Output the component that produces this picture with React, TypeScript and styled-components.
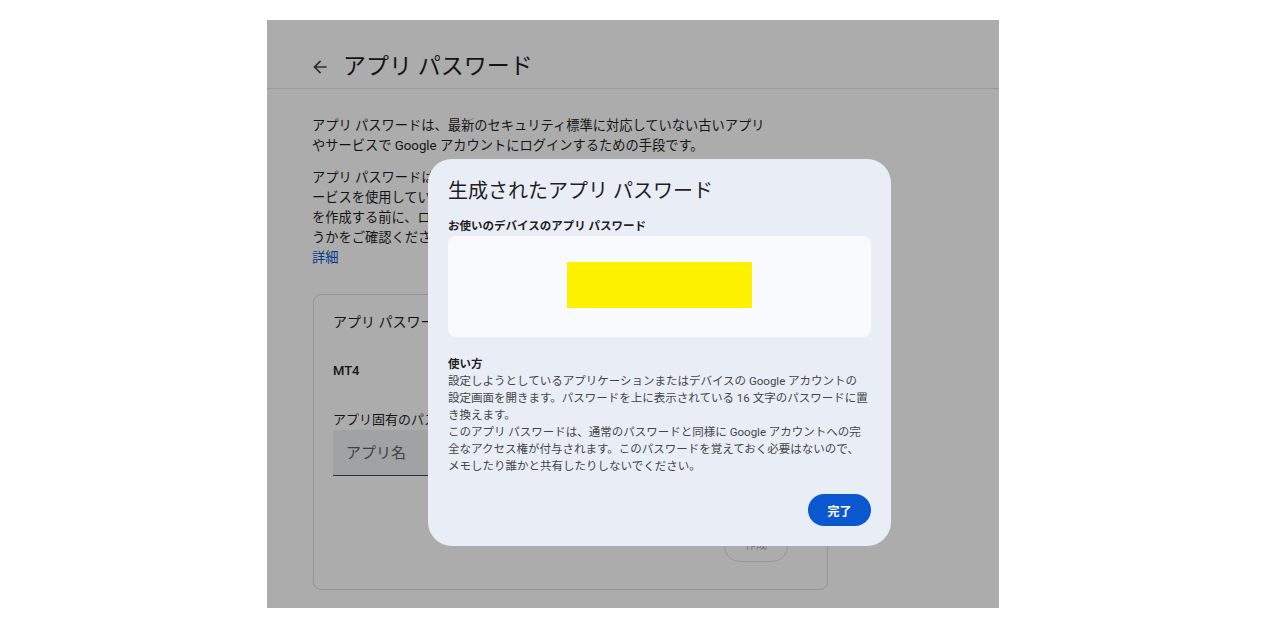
import React from "react";
import styled, { createGlobalStyle } from "styled-components";

const GlobalStyle = createGlobalStyle`
  html, body { margin: 0; padding: 0; background: #ffffff; }
  body {
    font-family: Roboto, "Noto Sans CJK JP", sans-serif;
    -webkit-font-smoothing: antialiased;
  }
  * { box-sizing: border-box; }
`;

const Stage = styled.div`
  display: flex;
  justify-content: center;
  padding-top: 20px;
`;

const Frame = styled.div`
  position: relative;
  width: 732px;
  height: 588px;
  overflow: hidden;
  background: #ffffff;
  color: #1f1f1f;
`;

const Header = styled.header`
  height: 69px;
  border-bottom: 1px solid #e3e3e3;
  display: flex;
  align-items: center;
  padding: 31px 0 5px 43px;
  gap: 13px;
`;

const BackIcon = styled.svg`
  width: 20px;
  height: 20px;
  fill: #444746;
  flex: none;
`;

const PageTitle = styled.h1`
  margin: 0;
  font-size: 23px;
  line-height: 32px;
  font-weight: 400;
  color: #1f1f1f;
`;

const Content = styled.main`
  padding: 27px 0 0 45px;
`;

const Para = styled.p<{ $mb: number }>`
  margin: 0 0 ${(p) => p.$mb}px;
  font-size: 13.25px;
  line-height: 20px;
  color: #1f1f1f;
  white-space: nowrap;
`;

const Link = styled.a`
  color: #0b57d0;
  text-decoration: none;
`;

const Card = styled.section`
  margin-left: 1px;
  width: 515px;
  height: 296px;
  border: 1px solid #dadce0;
  border-radius: 8px;
  padding: 17px 0 0 19px;
`;

const CardTitle = styled.h2`
  margin: 0 0 29px;
  font-size: 14px;
  line-height: 20px;
  font-weight: 400;
  color: #1f1f1f;
`;

const AppName = styled.div`
  margin-bottom: 29px;
  font-size: 13px;
  line-height: 20px;
  font-weight: 500;
  color: #1f1f1f;
`;

const FieldLabel = styled.div`
  font-size: 13px;
  line-height: 20px;
  color: #1f1f1f;
`;

const Field = styled.div`
  width: 455px;
  height: 46px;
  background: #eef0f3;
  border-bottom: 1px solid #444746;
  border-radius: 4px 4px 0 0;
  display: flex;
  align-items: center;
  padding: 0 0 3px 13px;
  font-size: 15px;
  color: #5f6368;
`;

const Actions = styled.div`
  width: 455px;
  margin-top: 54px;
  display: flex;
  justify-content: flex-end;
`;

const OutlineButton = styled.button`
  width: 64px;
  height: 32px;
  border-radius: 16px;
  border: 1px solid rgba(31, 31, 31, 0.14);
  background: transparent;
  font-family: inherit;
  font-size: 11px;
  color: rgba(31, 31, 31, 0.4);
  padding: 0 0 5px;
`;

const Scrim = styled.div`
  position: absolute;
  inset: 0;
  background: rgba(0, 0, 0, 0.325);
`;

const Dialog = styled.div`
  position: absolute;
  left: 161px;
  top: 139px;
  width: 463px;
  height: 387px;
  padding: 18px 20px 20px;
  background: #e9eef6;
  border-radius: 24px;
  display: flex;
  flex-direction: column;
`;

const DialogTitle = styled.h2`
  margin: 0 0 13px;
  font-size: 20px;
  line-height: 28px;
  font-weight: 400;
  color: #1f1f1f;
`;

const SubHeading = styled.div`
  margin-bottom: 2px;
  font-size: 11.5px;
  line-height: 16px;
  font-weight: 700;
  color: #1f1f1f;
`;

const PasswordBox = styled.div`
  height: 101px;
  background: #f8fafd;
  border-radius: 8px;
  display: flex;
  align-items: center;
  justify-content: center;
  padding-bottom: 3px;
`;

const Redaction = styled.div`
  width: 185px;
  height: 46px;
  background: #fff200;
`;

const HowTo = styled.div`
  margin-top: 19px;
  font-size: 11.5px;
  line-height: 17px;
  color: #444746;
  white-space: nowrap;
`;

const HowToTitle = styled.div`
  font-weight: 700;
  color: #1f1f1f;
`;

const DialogFooter = styled.div`
  margin-top: auto;
  display: flex;
  justify-content: flex-end;
`;

const PrimaryButton = styled.button`
  width: 63px;
  height: 32px;
  border: none;
  border-radius: 16px;
  background: #0b57d0;
  color: #ffffff;
  font-family: inherit;
  font-size: 12px;
  font-weight: 700;
  padding: 0;
`;

export default function App() {
  return (
    <>
      <GlobalStyle />
      <Stage>
        <Frame>
          <Header>
            <BackIcon viewBox="0 0 24 24">
              <path d="M20 11H7.83l5.59-5.59L12 4l-8 8 8 8 1.41-1.41L7.83 13H20v-2z" />
            </BackIcon>
            <PageTitle>アプリ パスワード</PageTitle>
          </Header>
          <Content>
            <Para $mb={12}>
              アプリ パスワードは、最新のセキュリティ標準に対応していない古いアプリ
              <br />
              やサービスで Google アカウントにログインするための手段です。
            </Para>
            <Para $mb={26}>
              アプリ パスワードは、最新のセキュリティ標準を使用する最新のアプリやサ
              <br />
              ービスを使用している場合に比べて安全性が低くなります。
              <br />
              を作成する前に、ログインに必要かど
              <br />
              うかをご確認ください。
              <br />
              <Link href="#">詳細</Link>
            </Para>
            <Card>
              <CardTitle>アプリ パスワード</CardTitle>
              <AppName>MT4</AppName>
              <FieldLabel>アプリ固有のパスワード</FieldLabel>
              <Field>アプリ名</Field>
              <Actions>
                <OutlineButton>作成</OutlineButton>
              </Actions>
            </Card>
          </Content>
          <Scrim />
          <Dialog role="dialog">
            <DialogTitle>生成されたアプリ パスワード</DialogTitle>
            <SubHeading>お使いのデバイスのアプリ パスワード</SubHeading>
            <PasswordBox>
              <Redaction />
            </PasswordBox>
            <HowTo>
              <HowToTitle>使い方</HowToTitle>
              設定しようとしているアプリケーションまたはデバイスの Google アカウントの
              <br />
              設定画面を開きます。パスワードを上に表示されている 16 文字のパスワードに置
              <br />
              き換えます。
              <br />
              このアプリ パスワードは、通常のパスワードと同様に Google アカウントへの完
              <br />
              全なアクセス権が付与されます。このパスワードを覚えておく必要はないので、
              <br />
              メモしたり誰かと共有したりしないでください。
            </HowTo>
            <DialogFooter>
              <PrimaryButton>完了</PrimaryButton>
            </DialogFooter>
          </Dialog>
        </Frame>
      </Stage>
    </>
  );
}
